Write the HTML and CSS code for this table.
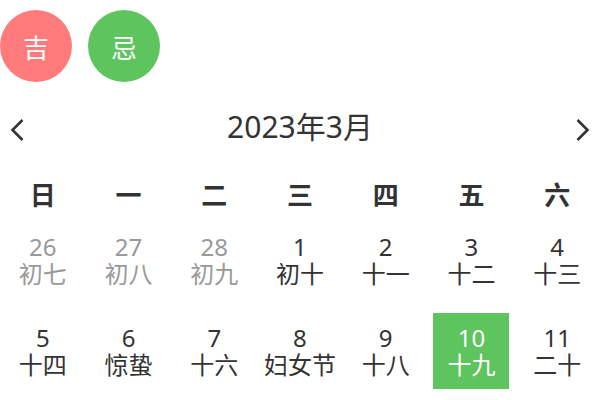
FILE: index.html
```html
<!DOCTYPE html>
<html lang="zh">
<head>
<meta charset="utf-8">
<link rel="stylesheet" href="styles.css">
</head>
<body>
<div class="top">
  <div class="circle ji">吉</div>
  <div class="circle avoid">忌</div>
</div>
<div class="header">
  <svg class="chev" width="16" height="24" viewBox="0 0 16 24"><path d="M13.5 2 L3.5 12 L13.5 22" fill="none" stroke="#333" stroke-width="2.6"/></svg>
  <div class="title">2023年3月</div>
  <svg class="chev" width="16" height="24" viewBox="0 0 16 24"><path d="M2.5 2 L12.5 12 L2.5 22" fill="none" stroke="#333" stroke-width="2.6"/></svg>
</div>
<div class="week">
  <div>日</div><div>一</div><div>二</div><div>三</div><div>四</div><div>五</div><div>六</div>
</div>
<div class="grid">
  <div class="cell other"><span class="num">26</span><span class="lunar">初七</span></div>
  <div class="cell other"><span class="num">27</span><span class="lunar">初八</span></div>
  <div class="cell other"><span class="num">28</span><span class="lunar">初九</span></div>
  <div class="cell"><span class="num">1</span><span class="lunar">初十</span></div>
  <div class="cell"><span class="num">2</span><span class="lunar">十一</span></div>
  <div class="cell"><span class="num">3</span><span class="lunar">十二</span></div>
  <div class="cell"><span class="num">4</span><span class="lunar">十三</span></div>
  <div class="cell"><span class="num">5</span><span class="lunar">十四</span></div>
  <div class="cell"><span class="num">6</span><span class="lunar">惊蛰</span></div>
  <div class="cell"><span class="num">7</span><span class="lunar">十六</span></div>
  <div class="cell"><span class="num">8</span><span class="lunar">妇女节</span></div>
  <div class="cell"><span class="num">9</span><span class="lunar">十八</span></div>
  <div class="cell selected"><span class="num">10</span><span class="lunar">十九</span></div>
  <div class="cell"><span class="num">11</span><span class="lunar">二十</span></div>
</div>
</body>
</html>
```
FILE: styles.css
```css
html, body {
  margin: 0;
  padding: 0;
  background: #fff;
}
body {
  width: 600px;
  height: 400px;
  overflow: hidden;
  font-family: "Noto Sans", "Noto Sans CJK SC", sans-serif;
  color: #333;
}
.top {
  display: flex;
  gap: 16px;
  padding-top: 10px;
}
.circle {
  width: 72px;
  height: 72px;
  border-radius: 50%;
  color: #fff;
  font-family: "Noto Sans CJK SC", sans-serif;
  font-size: 26px;
  display: flex;
  align-items: center;
  justify-content: center;
}
.ji { background: #ff7b7b; }
.avoid { background: #5ec55e; }
.header {
  margin-top: 28px;
  height: 36px;
  display: flex;
  align-items: center;
  justify-content: space-between;
  padding: 0 9px;
}
.chev {
  margin-top: 4px;
}
.title {
  font-size: 30px;
  line-height: 36px;
  padding-bottom: 3px;
}
.week {
  margin-top: 28px;
  display: grid;
  grid-template-columns: repeat(7, 1fr);
  text-align: center;
  font-family: "Noto Sans CJK SC", sans-serif;
  font-size: 26px;
  font-weight: bold;
  line-height: 40px;
}
.grid {
  margin-top: 8px;
  display: grid;
  grid-template-columns: repeat(7, 1fr);
  row-gap: 15px;
}
.cell {
  justify-self: center;
  width: 76px;
  height: 76px;
  display: flex;
  flex-direction: column;
  align-items: center;
  justify-content: center;
  font-size: 24px;
  line-height: 27px;
}
.other { color: #999; }
.selected {
  background: #5ec55e;
  color: #fff;
}
```
